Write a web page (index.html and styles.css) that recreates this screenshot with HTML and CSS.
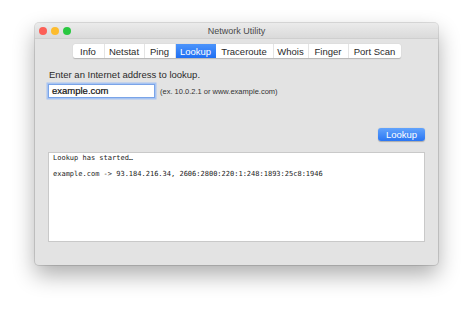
FILE: index.html
```html
<!DOCTYPE html>
<html>
<head>
<meta charset="utf-8">
<link rel="stylesheet" href="styles.css">
</head>
<body>
<div class="window">
  <div class="titlebar">
    <div class="lights">
      <span class="light red"></span>
      <span class="light yellow"></span>
      <span class="light green"></span>
    </div>
    <div class="title">Network Utility</div>
  </div>
  <div class="content">
    <div class="tabs">
      <span class="tab t-info">Info</span>
      <span class="tab t-netstat">Netstat</span>
      <span class="tab t-ping">Ping</span>
      <span class="tab t-lookup active">Lookup</span>
      <span class="tab t-trace">Traceroute</span>
      <span class="tab t-whois">Whois</span>
      <span class="tab t-finger">Finger</span>
      <span class="tab t-port">Port Scan</span>
    </div>
    <div class="label">Enter an Internet address to lookup.</div>
    <div class="inputrow">
      <div class="input">example.com</div>
      <div class="hint">(ex. 10.0.2.1 or www.example.com)</div>
    </div>
    <div class="btnrow">
      <div class="button">Lookup</div>
    </div>
    <div class="output">
      <div>Lookup has started…</div>
      <div class="blank">&nbsp;</div>
      <div>example.com -&gt; 93.184.216.34, 2606:2800:220:1:248:1893:25c8:1946</div>
    </div>
  </div>
</div>
</body>
</html>
```
FILE: styles.css
```css
* { box-sizing: border-box; }
html, body {
  margin: 0;
  padding: 0;
  background: #ffffff;
}
body {
  width: 474px;
  height: 311px;
  overflow: hidden;
  padding-top: 23px;
  padding-left: 35px;
  font-family: "Liberation Sans", Arial, sans-serif;
}
.window {
  width: 403px;
  height: 242px;
  background: #e3e3e3;
  border-radius: 4px;
  box-shadow: 0 0 0 1px rgba(0,0,0,0.12), 0 10px 22px rgba(0,0,0,0.32);
  overflow: hidden;
  display: flex;
  flex-direction: column;
}
.titlebar {
  height: 16px;
  background: linear-gradient(#ebebeb, #dadada);
  border-bottom: 1px solid #cfcfcf;
  position: relative;
  display: flex;
  align-items: center;
  justify-content: center;
  flex-shrink: 0;
}
.lights {
  position: absolute;
  left: 4px;
  top: 4px;
  display: flex;
  gap: 4px;
}
.light {
  width: 8px;
  height: 8px;
  border-radius: 50%;
  display: block;
}
.red { background: #fc5f57; }
.yellow { background: #fdbc2e; }
.green { background: #29c840; }
.title {
  font-size: 9px;
  color: #4a4a4a;
}
.content {
  padding: 5px 13px 0 13px;
  display: flex;
  flex-direction: column;
}
.tabs {
  align-self: center;
  display: flex;
  height: 14px;
  background: #ffffff;
  border-radius: 2px;
  box-shadow: 0 0.5px 1px rgba(0,0,0,0.2);
}
.tab {
  font-size: 9.5px;
  color: #2a2a2a;
  display: flex;
  align-items: center;
  justify-content: center;
  border-right: 1px solid #e4e4e4;
}
.tab:last-child { border-right: none; }
.t-info { width: 32px; }
.t-netstat { width: 40px; }
.t-ping { width: 31px; }
.t-lookup { width: 40px; }
.t-trace { width: 58px; }
.t-whois { width: 35px; }
.t-finger { width: 40px; }
.t-port { width: 52px; }
.tab.active {
  background: linear-gradient(#4c94fb, #1f6ff3);
  color: #ffffff;
  border-right: none;
}
.label {
  margin-top: 11px;
  font-size: 9.5px;
  color: #2a2a2a;
  padding-left: 1px;
  line-height: 12px;
}
.inputrow {
  margin-top: 3px;
  display: flex;
  align-items: center;
}
.input {
  width: 107px;
  height: 14px;
  background: #ffffff;
  border: 1px solid #7aa4e8;
  box-shadow: 0 0 0 1.5px #a7c4f2;
  font-size: 9.5px;
  font-weight: 500;
  color: #111111;
  -webkit-text-stroke: 0.2px #111;
  padding: 0 3px;
  line-height: 12px;
}
.hint {
  margin-left: 5px;
  font-size: 7.5px;
  color: #333333;
}
.btnrow {
  display: flex;
  justify-content: flex-end;
  margin-top: 30px;
}
.button {
  width: 47px;
  height: 13px;
  background: linear-gradient(#62a3fc, #2a76f3);
  border-radius: 3px;
  color: #ffffff;
  font-size: 9.5px;
  display: flex;
  align-items: center;
  justify-content: center;
  box-shadow: 0 0.5px 1px rgba(0,0,0,0.25);
}
.output {
  margin-top: 11px;
  height: 90px;
  background: #ffffff;
  border: 1px solid #c9c9c9;
  font-family: "DejaVu Sans Mono", monospace;
  font-size: 7px;
  color: #222222;
  padding: 1px 4px;
  line-height: 8px;
}
```
